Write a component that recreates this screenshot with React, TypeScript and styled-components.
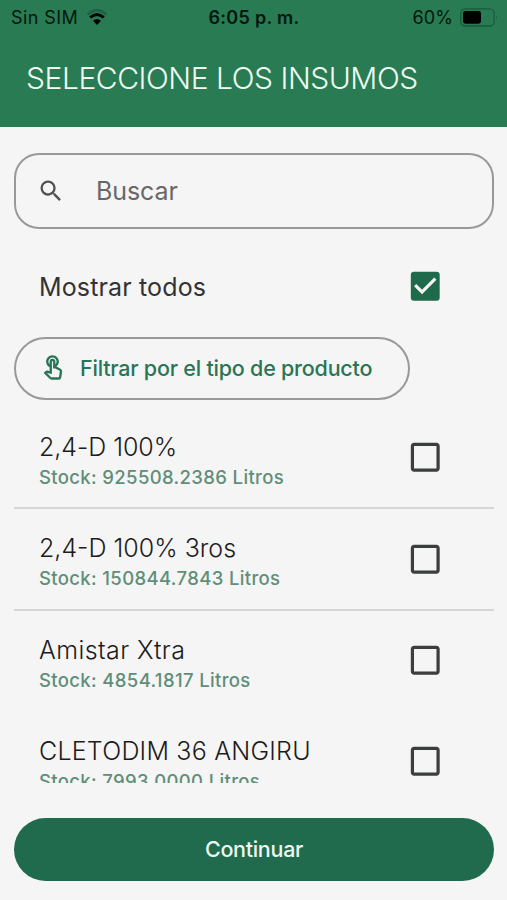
import React, { useState } from 'react';
import styled, { createGlobalStyle } from 'styled-components';
import {
  MdCheckBox,
  MdCheckBoxOutlineBlank,
  MdOutlineTouchApp,
  MdSearch,
} from 'react-icons/md';

const GlobalStyle = createGlobalStyle`
  * { box-sizing: border-box; }
  body {
    margin: 0;
    background: #f5f5f5;
    font-family: Inter, 'Liberation Sans', sans-serif;
  }
  button, input { font: inherit; }
`;

const Screen = styled.div`
  display: flex;
  flex-direction: column;
  width: 507px;
  height: 900px;
  overflow: hidden;
  background: #f5f5f5;
`;

const Header = styled.header`
  flex: none;
  height: 127px;
  background: #297b53;
`;

const StatusBar = styled.div`
  display: grid;
  grid-template-columns: 1fr auto 1fr;
  align-items: center;
  height: 35px;
  padding: 0 9px 0 11px;
  font-size: 18px;
  line-height: 22px;
  color: #04170d;
`;

const StatusGroup = styled.div<{ $end?: boolean }>`
  display: flex;
  align-items: center;
  justify-content: ${(p) => (p.$end ? 'flex-end' : 'flex-start')};
  gap: ${(p) => (p.$end ? '7px' : '8px')};
  letter-spacing: ${(p) => (p.$end ? '0.1px' : '0.4px')};
`;

const Clock = styled.div`
  margin-right: 1px;
  font-weight: 600;
  letter-spacing: 0.3px;
`;

const Title = styled.h1`
  margin: 23.5px 0 0 26px;
  font-size: 30px;
  font-weight: 300;
  line-height: 38px;
  letter-spacing: -0.45px;
  color: #effbf1;
`;

const Main = styled.main`
  display: flex;
  flex: 1;
  flex-direction: column;
  align-items: stretch;
  min-height: 0;
  padding: 26px 13px 19px 14px;
`;

const SearchField = styled.label`
  display: flex;
  flex: none;
  align-items: center;
  gap: 31px;
  height: 76px;
  padding: 0 22px 0 21px;
  border: 2px solid #999;
  border-radius: 25px;
  color: #505050;
`;

const SearchInput = styled.input`
  flex: 1;
  min-width: 0;
  padding: 0;
  border: 0;
  outline: 0;
  background: transparent;
  font-size: 25px;
  letter-spacing: -0.1px;
  color: #222;

  &::placeholder {
    color: #686868;
    opacity: 1;
  }
`;

const ShowAll = styled.div`
  display: flex;
  flex: none;
  align-items: center;
  justify-content: space-between;
  height: 108px;
  padding: 7px 50px 0 25px;
  font-size: 25px;
  letter-spacing: 0.15px;
  color: #333;
`;

const CheckButton = styled.button<{ $checked: boolean }>`
  display: flex;
  flex: none;
  padding: 0;
  border: 0;
  background: none;
  color: ${(p) => (p.$checked ? '#206a4c' : '#3b3e3c')};
`;

const FilterButton = styled.button`
  display: flex;
  flex: none;
  align-items: center;
  align-self: flex-start;
  gap: 13px;
  width: 396px;
  height: 63px;
  padding: 0 0 1px 23px;
  border: 2px solid #999;
  border-radius: 32px;
  background: transparent;
  font-size: 21.5px;
  font-weight: 500;
  letter-spacing: -0.22px;
  white-space: nowrap;
  color: #297556;
`;

const List = styled.ul`
  flex: none;
  height: 375px;
  margin: 8px 0 35px;
  padding: 0;
  overflow: hidden;
  list-style: none;
`;

const Item = styled.li<{ $divided: boolean }>`
  display: flex;
  align-items: center;
  justify-content: space-between;
  height: 101.3px;
  padding: 0 50px 0 25px;
  border-bottom: 2px solid ${(p) => (p.$divided ? '#d6d6d6' : 'transparent')};
`;

const ItemName = styled.div<{ $tracking: number }>`
  margin-top: 7px;
  font-size: 25px;
  font-weight: 300;
  line-height: 33px;
  letter-spacing: ${(p) => p.$tracking}px;
  color: #1c1c1c;
`;

const ItemStock = styled.div`
  font-size: 18.5px;
  font-weight: 500;
  line-height: 27px;
  letter-spacing: 0.36px;
  color: #5f8e79;
`;

const ContinueButton = styled.button`
  flex: none;
  height: 63px;
  padding: 0 0 2px;
  border: 0;
  border-radius: 32px;
  background: #206a4e;
  font-size: 21.5px;
  font-weight: 500;
  letter-spacing: -0.3px;
  color: #edf7f0;
`;

const WifiIcon = () => (
  <svg width="22" height="17" viewBox="0 0 22 17" fill="none">
    <path d="M1.5 5.5Q11-3 20.5 5.5" stroke="#1e6342" strokeWidth="2.8" />
    <path d="M4.2 8.5Q11 2.4 17.8 8.5" stroke="#000" strokeWidth="3" />
    <path d="M7 11.8Q11 8 15 11.8L11 16Z" fill="#000" />
  </svg>
);

const BatteryIcon = () => (
  <svg width="38" height="19" viewBox="0 0 38 19" fill="none">
    <rect x="0.8" y="0.8" width="33.4" height="17.2" rx="4.5" stroke="#1a5b3b" strokeWidth="1.3" />
    <rect x="3" y="3" width="18" height="12.7" rx="2.4" fill="#000" />
    <path d="M36 6.5q1.7 2.9 0 5.8z" fill="#1a5b3b" />
  </svg>
);

type Product = { name: string; stock: string; tracking: number };

const products: Product[] = [
  { name: '2,4-D 100%', stock: '925508.2386', tracking: -0.05 },
  { name: '2,4-D 100% 3ros', stock: '150844.7843', tracking: 0 },
  { name: 'Amistar Xtra', stock: '4854.1817', tracking: 0.4 },
  { name: 'CLETODIM 36 ANGIRU', stock: '7993.0000', tracking: 0.22 },
];

function Check({ label, initial = false }: { label: string; initial?: boolean }) {
  const [checked, setChecked] = useState(initial);
  const Icon = checked ? MdCheckBox : MdCheckBoxOutlineBlank;
  return (
    <CheckButton
      type="button"
      role="checkbox"
      aria-checked={checked}
      aria-label={label}
      $checked={checked}
      onClick={() => setChecked(!checked)}
    >
      <Icon size={38.5} />
    </CheckButton>
  );
}

export default function App() {
  return (
    <Screen>
      <GlobalStyle />
      <Header>
        <StatusBar>
          <StatusGroup>
            Sin SIM
            <WifiIcon />
          </StatusGroup>
          <Clock>6:05 p. m.</Clock>
          <StatusGroup $end>
            60%
            <BatteryIcon />
          </StatusGroup>
        </StatusBar>
        <Title>SELECCIONE LOS INSUMOS</Title>
      </Header>
      <Main>
        <SearchField>
          <MdSearch size={28} />
          <SearchInput placeholder="Buscar" />
        </SearchField>
        <ShowAll>
          Mostrar todos
          <Check label="Mostrar todos" initial />
        </ShowAll>
        <FilterButton type="button">
          <MdOutlineTouchApp size={28} />
          Filtrar por el tipo de producto
        </FilterButton>
        <List>
          {products.map((p, i) => (
            <Item key={p.name} $divided={i < 2}>
              <div>
                <ItemName $tracking={p.tracking}>{p.name}</ItemName>
                <ItemStock>Stock: {p.stock} Litros</ItemStock>
              </div>
              <Check label={p.name} />
            </Item>
          ))}
        </List>
        <ContinueButton type="button">Continuar</ContinueButton>
      </Main>
    </Screen>
  );
}
